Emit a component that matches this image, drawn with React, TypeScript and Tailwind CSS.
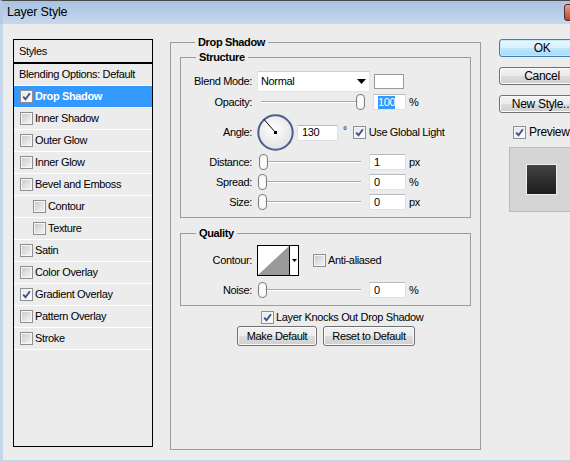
import type { CSSProperties, ReactNode } from 'react';

const styleRows: { label: string; checked?: boolean; indent?: boolean; selected?: boolean; plain?: boolean }[] = [
  { label: 'Blending Options: Default', plain: true },
  { label: 'Drop Shadow', checked: true, selected: true },
  { label: 'Inner Shadow' },
  { label: 'Outer Glow' },
  { label: 'Inner Glow' },
  { label: 'Bevel and Emboss' },
  { label: 'Contour', indent: true },
  { label: 'Texture', indent: true },
  { label: 'Satin' },
  { label: 'Color Overlay' },
  { label: 'Gradient Overlay', checked: true },
  { label: 'Pattern Overlay' },
  { label: 'Stroke' },
];

function Check({ checked }: { checked?: boolean }) {
  return (
    <span className="flex h-[13px] w-[13px] shrink-0 border border-[#8f8f8f] bg-[#f6f6f6] p-[1px]">
      <span
        className={
          checked
            ? 'flex h-full w-full items-center justify-center bg-gradient-to-br from-[#e6e7ea] to-white'
            : 'h-full w-full bg-gradient-to-br from-[#c9ccd1] to-[#f4f4f4]'
        }
      >
        {checked && (
          <svg width="9" height="9" viewBox="0 0 9 9">
            <path d="M1.2 4.6 L3.5 7.2 L7.9 1.2" fill="none" stroke="#3e4f8c" strokeWidth="1.9" />
          </svg>
        )}
      </span>
    </span>
  );
}

function Slider({ value }: { value: number }) {
  const thumb: CSSProperties = { left: 1 + value * 0.98 };
  return (
    <div className="relative h-[16px] w-[108px] shrink-0">
      <div className="absolute left-[4px] right-[4px] top-[7px] h-[2px] border-b border-white bg-[#a9a9a9]" />
      <svg className="absolute top-[0px]" style={thumb} width="9" height="16" viewBox="0 0 9 16">
        <rect x="0.5" y="0.5" width="8" height="15" rx="3.5" fill="#f3f3f3" stroke="#808080" />
        <rect x="2" y="2" width="5" height="12" rx="2" fill="#fbfbfb" />
      </svg>
    </div>
  );
}

function NumBox({ value, w, selected }: { value: string; w: string; selected?: boolean }) {
  return (
    <div className={`flex h-[16px] shrink-0 items-center border border-[#dde1e7] border-t-[#b7bac0] bg-white pl-[4px] ${w}`}>
      {selected ? <span className="bg-[#3399ff] leading-[13px] text-white">{value}</span> : value}
    </div>
  );
}

function Label({ children }: { children: ReactNode }) {
  return <div className="w-[71px] shrink-0 text-right">{children}</div>;
}

function SliderRow({ label, value, unit, mt }: { label: string; value: string; unit: string; mt: string }) {
  return (
    <div className={`flex h-[16px] items-center ${mt}`}>
      <Label>{label}</Label>
      <div className="ml-[5px]">
        <Slider value={Number(value)} />
      </div>
      <div className="ml-[4px]">
        <NumBox value={value} w="w-[37px]" />
      </div>
      <span className="ml-[3px]">{unit}</span>
    </div>
  );
}

function Button({ children, w, primary }: { children: ReactNode; w: string; primary?: boolean }) {
  return (
    <div
      className={`flex shrink-0 items-center justify-center rounded-[3px] border ${w} ${
        primary
          ? 'border-[#3c7fb1] bg-[linear-gradient(#eaf6fd,#d9f0fc_50%,#bee6fd_50%,#a7d9f5)] shadow-[inset_0_0_0_1px_#c4e8fb]'
          : 'border-[#707070] bg-[linear-gradient(#f2f2f2,#ebebeb_50%,#dddddd_50%,#cfcfcf)] shadow-[inset_0_0_0_1px_#fbfbfb]'
      }`}
    >
      {children}
    </div>
  );
}

export default function App() {
  return (
    <div className="flex h-[462px] w-[570px] flex-col overflow-hidden bg-[#ececec] font-['Liberation_Sans',Arial,sans-serif] text-[11px] tracking-[-0.35px] text-black">
      {/* title bar */}
      <div className="flex h-[24px] shrink-0 items-center border-t border-[#4a4a4a] border-l-[3px] border-l-[#b4cbe6] bg-gradient-to-b from-[#a9c2e0] to-[#c5d8ee]">
        <div className="flex-1 pl-[4px] text-[12.5px] tracking-[-0.2px]">Layer Style</div>
        <div className="mr-[-37px] h-[17px] w-[43px] shrink-0 rounded-[3px] border border-[#5b2a22] bg-gradient-to-b from-[#e0a191] to-[#b9412b]" />
      </div>

      <div className="flex flex-1 border-b-[2px] border-l-[3px] border-[#c4d6eb]">
        {/* styles list */}
        <div className="ml-[10px] mt-[15px] flex h-[408px] w-[140px] shrink-0 flex-col border border-black">
          <div className="flex h-[24px] shrink-0 items-center border-b-2 border-black pl-[5px]">Styles</div>
          {styleRows.map((r) => (
            <div
              key={r.label}
              className={`flex h-[22px] shrink-0 items-center gap-[2px] border-b border-white ${
                r.plain ? 'pl-[5px]' : r.indent ? 'pl-[19px]' : 'pl-[6px]'
              } ${r.selected ? 'bg-[#3399ff] font-bold text-white' : ''}`}
            >
              {!r.plain && <Check checked={r.checked} />}
              <span>{r.label}</span>
            </div>
          ))}
        </div>

        {/* drop shadow panel */}
        <fieldset className="ml-[17px] mt-[11px] h-[415px] w-[311px] shrink-0 border border-[#9c9c9c] px-[9px]">
          <legend className="ml-[15px] px-[3px] font-bold leading-[14px]">Drop Shadow</legend>

          <fieldset className="mt-[1px] h-[168px] border border-[#9c9c9c]">
            <legend className="ml-[15px] px-[3px] font-bold leading-[14px]">Structure</legend>

            <div className="mt-[7px] flex h-[21px] items-center">
              <Label>Blend Mode:</Label>
              <div className="ml-[5px] flex h-[21px] w-[113px] items-center justify-between border border-[#e4e4e4] border-t-[#d0d0d0] bg-white pl-[3px] pr-[3px]">
                <span>Normal</span>
                <svg width="9" height="5" viewBox="0 0 9 5">
                  <polygon points="0,0 9,0 4.5,5" fill="#000" />
                </svg>
              </div>
              <div className="ml-[4px] h-[15px] w-[30px] border border-[#9a9a9a] bg-white" />
            </div>

            <div className="mt-[2px] flex h-[16px] items-center">
              <Label>Opacity:</Label>
              <div className="ml-[5px]">
                <Slider value={100} />
              </div>
              <div className="ml-[8px]">
                <NumBox value="100" w="w-[33px]" selected />
              </div>
              <span className="ml-[3px]">%</span>
            </div>

            <div className="mt-[4px] flex h-[37px] items-center">
              <Label>Angle:</Label>
              <svg className="ml-[5px] shrink-0" width="37" height="37" viewBox="0 0 37 37">
                <defs>
                  <radialGradient id="dial" cx="45%" cy="40%" r="60%">
                    <stop offset="0%" stopColor="#ffffff" />
                    <stop offset="100%" stopColor="#e2e2e2" />
                  </radialGradient>
                </defs>
                <circle cx="18.5" cy="18.5" r="17.2" fill="url(#dial)" stroke="#4d5f8f" strokeWidth="2" />
                <line x1="18.5" y1="18.5" x2="6.8" y2="5.2" stroke="#000" strokeWidth="1" />
                <rect x="17" y="17" width="3" height="3" fill="#000" />
              </svg>
              <div className="ml-[3px]">
                <NumBox value="130" w="w-[41px]" />
              </div>
              <span className="ml-[5px] self-start pt-[9px] text-[10px]">°</span>
              <div className="ml-[6px] flex items-center gap-[3px]">
                <Check checked />
                <span>Use Global Light</span>
              </div>
            </div>

            <SliderRow label="Distance:" value="1" unit="px" mt="mt-[3px]" />
            <SliderRow label="Spread:" value="0" unit="%" mt="mt-[4px]" />
            <SliderRow label="Size:" value="0" unit="px" mt="mt-[4px]" />
          </fieldset>

          <fieldset className="mt-[8px] h-[80px] border border-[#9c9c9c]">
            <legend className="ml-[15px] px-[3px] font-bold leading-[14px]">Quality</legend>

            <div className="mt-[5px] flex h-[31px] items-center">
              <Label>Contour:</Label>
              <div className="ml-[5px] flex h-[31px] w-[42px] border border-black bg-white">
                <svg width="31" height="29" viewBox="0 0 31 29">
                  <polygon points="0,29 31,0 31,29" fill="#9a9a9a" />
                </svg>
                <div className="flex flex-1 items-center justify-center border-l border-black">
                  <svg width="5" height="3" viewBox="0 0 5 3">
                    <polygon points="0,0 5,0 2.5,3" fill="#000" />
                  </svg>
                </div>
              </div>
              <div className="ml-[14px] flex items-center gap-[2px]">
                <Check />
                <span>Anti-aliased</span>
              </div>
            </div>

            <SliderRow label="Noise:" value="0" unit="%" mt="mt-[6px]" />
          </fieldset>

          <div className="ml-[81px] mt-[3px] flex h-[16px] items-center gap-[2px]">
            <Check checked />
            <span>Layer Knocks Out Drop Shadow</span>
          </div>

          <div className="ml-[57px] mt-[1px] flex gap-[6px]">
            <Button w="h-[20px] w-[80px]">Make Default</Button>
            <Button w="h-[20px] w-[92px]">Reset to Default</Button>
          </div>
        </fieldset>

        {/* right column */}
        <div className="ml-[18px] mt-[15px] flex shrink-0 flex-col text-[12px] tracking-[-0.3px]">
          <Button w="h-[18px] w-[86px]" primary>
            OK
          </Button>
          <div className="mt-[10px]">
            <Button w="h-[18px] w-[86px]">Cancel</Button>
          </div>
          <div className="mt-[10px]">
            <Button w="h-[18px] w-[86px]">New Style...</Button>
          </div>
          <div className="ml-[14px] mt-[10px] flex items-center gap-[3px]">
            <Check checked />
            <span>Preview</span>
          </div>
          <div className="ml-[10px] mt-[6px] flex h-[65px] w-[65px] items-center justify-center border border-[#bcbcbc] bg-[#d5d5d5]">
            <div className="h-[31px] w-[31px] border border-[#efefef] bg-gradient-to-b from-[#434343] to-[#1d1d1d]" />
          </div>
        </div>
      </div>
    </div>
  );
}
